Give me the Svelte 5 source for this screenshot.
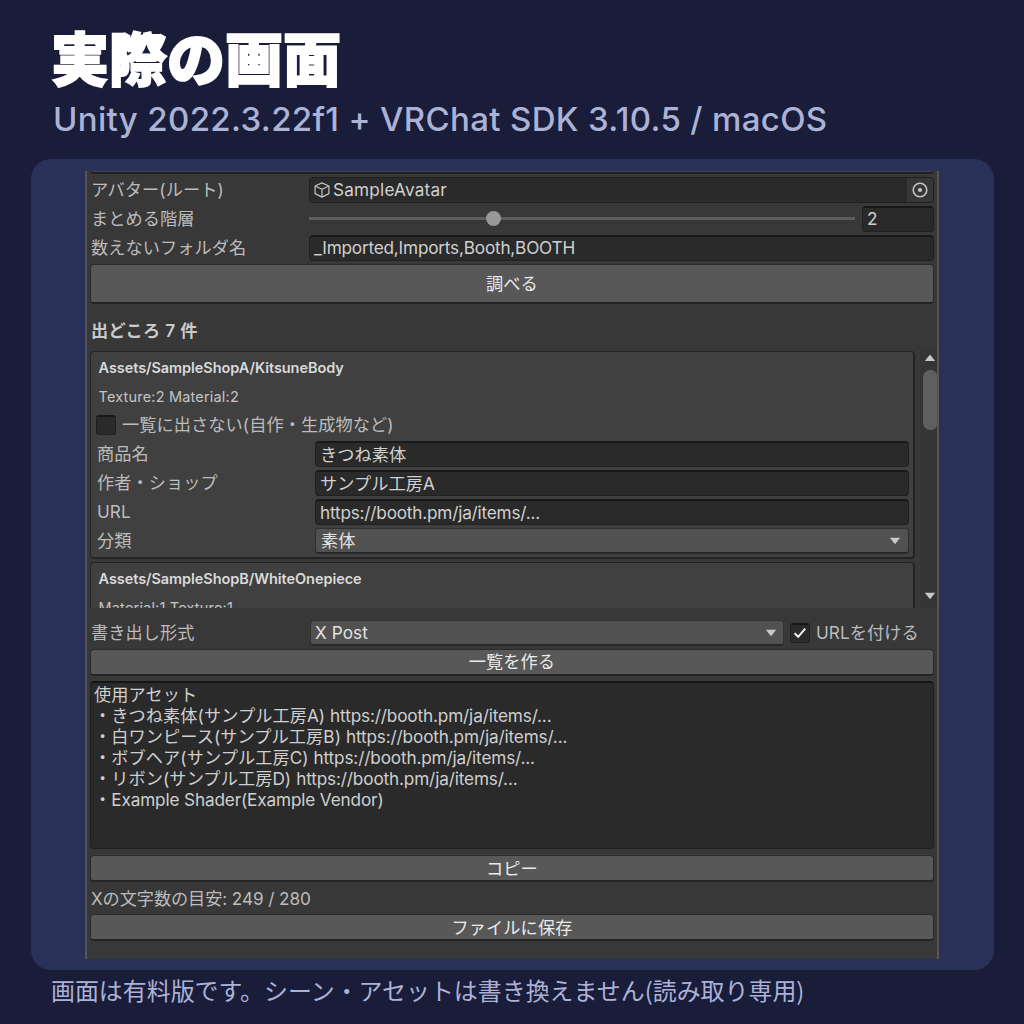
<script lang="ts">
	interface Source {
		path: string;
		counts: string;
		fields?: { label: string; value: string; latin?: boolean }[];
		category?: string;
	}

	const sources: Source[] = [
		{
			path: 'Assets/SampleShopA/KitsuneBody',
			counts: 'Texture:2 Material:2',
			fields: [
				{ label: '商品名', value: 'きつね素体' },
				{ label: '作者・ショップ', value: 'サンプル工房A' },
				{ label: 'URL', value: 'https://booth.pm/ja/items/...', latin: true }
			],
			category: '素体'
		},
		{
			path: 'Assets/SampleShopB/WhiteOnepiece',
			counts: 'Material:1 Texture:1'
		}
	];

	const url = 'https://booth.pm/ja/items/...';
	const output = [
		{ text: '使用アセット', tail: '' },
		{ text: '・きつね素体(サンプル工房A) ', tail: url },
		{ text: '・白ワンピース(サンプル工房B) ', tail: url },
		{ text: '・ボブヘア(サンプル工房C) ', tail: url },
		{ text: '・リボン(サンプル工房D) ', tail: url },
		{ text: '・', tail: 'Example Shader(Example Vendor)' }
	];

	let depth = $state(2);
	let hidden = $state(false);
	let withUrl = $state(true);
	let thumb = $derived(((depth - 1) / 3) * 100 + 0.4);
</script>

{#snippet caret(up = false)}
	<svg class="caret" viewBox="0 0 12 8" aria-hidden="true">
		<path d={up ? 'M6 .6 11.2 7H.8z' : 'M6 7.2.8.8h10.4z'} fill="#c8c8c8" />
	</svg>
{/snippet}

{#snippet check(on: boolean)}
	<span class="check">
		{#if on}
			<svg viewBox="0 0 18 17"><path d="M3.6 8.2 7.2 11.8 14.2 3.6" fill="none" stroke="#f2f2f2" stroke-width="2" /></svg>
		{/if}
	</span>
{/snippet}

<main>
	<header>
		<h1>実際の画面</h1>
		<p>Unity 2022.3.22f1 + VRChat SDK 3.10.5 / macOS</p>
	</header>

	<section class="frame">
		<div class="window">
			<div class="cut-field"></div>
			<div class="row">
				<span class="label">アバター(ルート)</span>
				<div class="field object">
					<svg class="cube" viewBox="0 0 16 16" fill="none" stroke="#c4c4c4" stroke-width="1.2" stroke-linejoin="round">
						<path d="M8 .9 14.9 4v7.6L8 15.1 1.1 11.6V4zM1.1 4 8 7.3 14.9 4M8 7.3v7.8" />
					</svg>
					<span>SampleAvatar</span>
					<button class="picker" aria-label="Select object">
						<svg viewBox="0 0 16 16">
							<circle cx="8" cy="8" r="6.8" fill="none" stroke="#c8c8c8" stroke-width="1.5" />
							<circle cx="8" cy="8" r="2.1" fill="#c8c8c8" />
						</svg>
					</button>
				</div>
			</div>
			<div class="row">
				<span class="label">まとめる階層</span>
				<div class="slider">
					<div class="knob" style="left: {thumb}%"></div>
				</div>
				<div class="field number">{depth}</div>
			</div>
			<div class="row">
				<span class="label">数えないフォルダ名</span>
				<div class="field latin">_Imported,Imports,Booth,BOOTH</div>
			</div>
			<button class="btn tall">調べる</button>

			<h2>出どころ 7 件</h2>

			<div class="scroll">
				<div class="list">
					{#each sources as source}
						<article class="card">
							<strong>{source.path}</strong>
							<span class="counts">{source.counts}</span>
							{#if source.fields}
								<button class="toggle" onclick={() => (hidden = !hidden)}>
									{@render check(hidden)}
									一覧に出さない(自作・生成物など)
								</button>
								{#each source.fields as field}
									<div class="row">
										<span class="label">{field.label}</span>
										<div class="field" class:latin={field.latin}>{field.value}</div>
									</div>
								{/each}
								<div class="row">
									<span class="label">分類</span>
									<button class="select">{source.category}{@render caret()}</button>
								</div>
							{/if}
						</article>
					{/each}
				</div>
				<div class="scrollbar">
					{@render caret(true)}
					<div class="grip"></div>
					{@render caret()}
				</div>
			</div>

			<div class="row export">
				<span class="label">書き出し形式</span>
				<button class="select">X Post{@render caret()}</button>
				<button class="toggle url" onclick={() => (withUrl = !withUrl)}>
					{@render check(withUrl)}
					URLを付ける
				</button>
			</div>
			<button class="btn">一覧を作る</button>

			<div class="output">
				{#each output as line}
					<div>{line.text}<span class="latin">{line.tail}</span></div>
				{/each}
			</div>

			<button class="btn low">コピー</button>
			<p class="estimate">Xの文字数の目安: 249 / 280</p>
			<button class="btn low">ファイルに保存</button>
		</div>
	</section>

	<footer>画面は有料版です。シーン・アセットは書き換えません(読み取り専用)</footer>
</main>

<style>
	:global(body) {
		margin: 0;
		background: #191d39;
	}

	main {
		box-sizing: border-box;
		width: 1024px;
		height: 1024px;
		overflow: hidden;
		background: #191d39;
		font-family: Inter, 'Noto Sans CJK JP', sans-serif;
		color: #c4c4c4;
	}

	main * {
		box-sizing: border-box;
	}

	button {
		font: inherit;
		letter-spacing: inherit;
		color: inherit;
		border: 0;
		padding: 0;
		background: none;
	}

	header {
		height: 159px;
		padding: 20px 0 0 51px;
	}

	h1 {
		margin: 0;
		font-family: 'Noto Sans CJK JP', sans-serif;
		font-size: 58px;
		line-height: 72px;
		font-weight: 900;
		color: #fff;
		-webkit-text-stroke: 1.8px #fff;
	}

	header p {
		margin: 4px 0 0 2px;
		font-size: 33px;
		line-height: 46px;
		font-weight: 500;
		letter-spacing: 0.34px;
		color: #abb2d6;
		white-space: nowrap;
	}

	.frame {
		width: 963px;
		height: 811px;
		margin-left: 31px;
		padding: 12px 55px 11px 54px;
		border-radius: 20px;
		background: #2a3158;
	}

	.window {
		display: flex;
		flex-direction: column;
		height: 788px;
		padding: 0 3px;
		border: solid #565656;
		border-width: 0 2px;
		background: #383838;
		font-size: 17.2px;
		letter-spacing: 0.07px;
		overflow: hidden;
	}

	.cut-field {
		flex: none;
		height: 3px;
		margin-bottom: 3px;
		border: 1px solid #222;
		border-width: 0 1px 2px;
		border-radius: 0 0 4px 4px;
		background: #444;
	}

	.row {
		display: flex;
		align-items: center;
		flex: none;
		height: 26px;
		margin-bottom: 3px;
		line-height: 24px;
		white-space: nowrap;
	}

	.label {
		flex: none;
		width: 219px;
		padding-left: 1px;
		color: #bcbcbc;
	}

	.field {
		flex: 1;
		height: 26px;
		padding: 0 4px;
		border: 1px solid #202020;
		border-top: 2px solid #181818;
		border-radius: 4px;
		background: #2a2a2a;
		color: #d0d0d0;
		line-height: 22px;
	}

	.latin {
		letter-spacing: -0.2px;
	}

	.object {
		display: flex;
		align-items: center;
		padding-right: 0;
		border-top: 1px solid #202020;
		line-height: 26px;
		letter-spacing: 0.2px;
	}

	.cube {
		width: 16px;
		height: 16px;
		margin-right: 3px;
	}

	.picker {
		display: flex;
		align-items: center;
		justify-content: center;
		width: 26px;
		height: 24px;
		margin-left: auto;
		border-radius: 0 3px 3px 0;
		background: #373737;
	}

	.picker svg {
		width: 16px;
		height: 16px;
	}

	.slider {
		position: relative;
		top: -1px;
		flex: 1;
		height: 3px;
		margin-right: 7px;
		background: #5e5e5e;
	}

	.knob {
		position: absolute;
		top: -6px;
		width: 15px;
		height: 15px;
		margin-left: -7px;
		border-radius: 50%;
		background: #999;
	}

	.number {
		flex: none;
		width: 72px;
	}

	.btn {
		flex: none;
		height: 27px;
		margin-bottom: 5px;
		border: 1px solid #2b2b2b;
		border-bottom: 2px solid #242424;
		border-radius: 4px;
		background: #585858;
		color: #eaeaea;
		line-height: 24px;
		text-align: center;
	}

	.btn.low {
		padding-top: 1px;
		line-height: 23px;
	}

	.btn.tall {
		height: 40px;
	}

	h2 {
		flex: none;
		height: 39px;
		margin: 0;
		padding: 10px 0 0 1px;
		font-size: 17.2px;
		line-height: 24px;
		font-weight: 600;
		letter-spacing: 0.35px;
		color: #cacaca;
		white-space: pre;
	}

	.scroll {
		display: flex;
		flex: none;
		height: 260px;
		margin-right: -3px;
		overflow: hidden;
	}

	.list {
		flex: 1;
		padding-top: 3px;
	}

	.card {
		display: flex;
		flex-direction: column;
		height: 208px;
		margin-bottom: 3px;
		padding: 2px 4px 0 5px;
		border: 1px solid #242424;
		border-width: 1px 2px 2px 1px;
		border-radius: 4px;
		background: #404040;
	}

	.card strong,
	.counts {
		flex: none;
		height: 29px;
		padding-left: 2.5px;
		font-size: 14.5px;
		line-height: 28px;
	}

	.card strong {
		font-weight: 600;
		letter-spacing: -0.06px;
		color: #dadada;
	}

	.counts {
		letter-spacing: 0.18px;
	}

	.toggle {
		display: flex;
		align-items: center;
		flex: none;
		height: 26px;
		margin-bottom: 3px;
		line-height: 24px;
		color: #bcbcbc;
		white-space: nowrap;
	}

	.card .label,
	.card .toggle {
		line-height: 26px;
	}

	.card .field {
		line-height: 24px;
	}

	.check {
		width: 20px;
		height: 20px;
		margin-right: 6px;
		border: 1px solid #202020;
		border-top: 2px solid #171717;
		border-radius: 3px;
		background: #2a2a2a;
	}

	.check svg {
		display: block;
		width: 18px;
		height: 17px;
	}

	.select {
		display: flex;
		align-items: center;
		justify-content: space-between;
		flex: 1;
		height: 26px;
		padding: 0 7px 0 5px;
		border: 1px solid #303030;
		border-bottom: 2px solid #282828;
		border-radius: 4px;
		background: #515151;
		color: #e2e2e2;
	}

	.caret {
		flex: none;
		width: 12px;
		height: 8px;
	}

	.scrollbar {
		display: flex;
		flex-direction: column;
		align-items: center;
		width: 17px;
		margin-left: 5px;
		padding: 6px 0 8px 3px;
		background: #353535;
	}

	.grip {
		width: 15px;
		height: 60px;
		margin: 8px 0 auto;
		border-radius: 8px;
		background: #5f5f5f;
	}

	.export {
		margin: 12px 0 3px;
	}

	.export .label {
		width: 220px;
	}

	.export .select {
		padding: 0 6px 0 4px;
	}

	.url {
		width: 144px;
		margin: 0 0 0 6px;
	}

	.output {
		flex: none;
		height: 168px;
		margin: 0 0 6px;
		padding: 1px 3px;
		border: 1px solid #202020;
		border-top: 2px solid #161616;
		border-radius: 4px;
		background: #2a2a2a;
		color: #cfcfcf;
		line-height: 21.1px;
		white-space: pre;
	}

	.output .latin {
		letter-spacing: -0.15px;
	}

	.estimate {
		flex: none;
		height: 27px;
		margin: 0;
		padding-left: 1px;
		line-height: 24px;
		letter-spacing: -0.1px;
		color: #bcbcbc;
	}

	footer {
		padding-left: 51px;
		font-family: 'Noto Sans CJK JP', sans-serif;
		font-size: 23.95px;
		line-height: 39px;
		color: #abb2d6;
		white-space: nowrap;
	}
</style>
